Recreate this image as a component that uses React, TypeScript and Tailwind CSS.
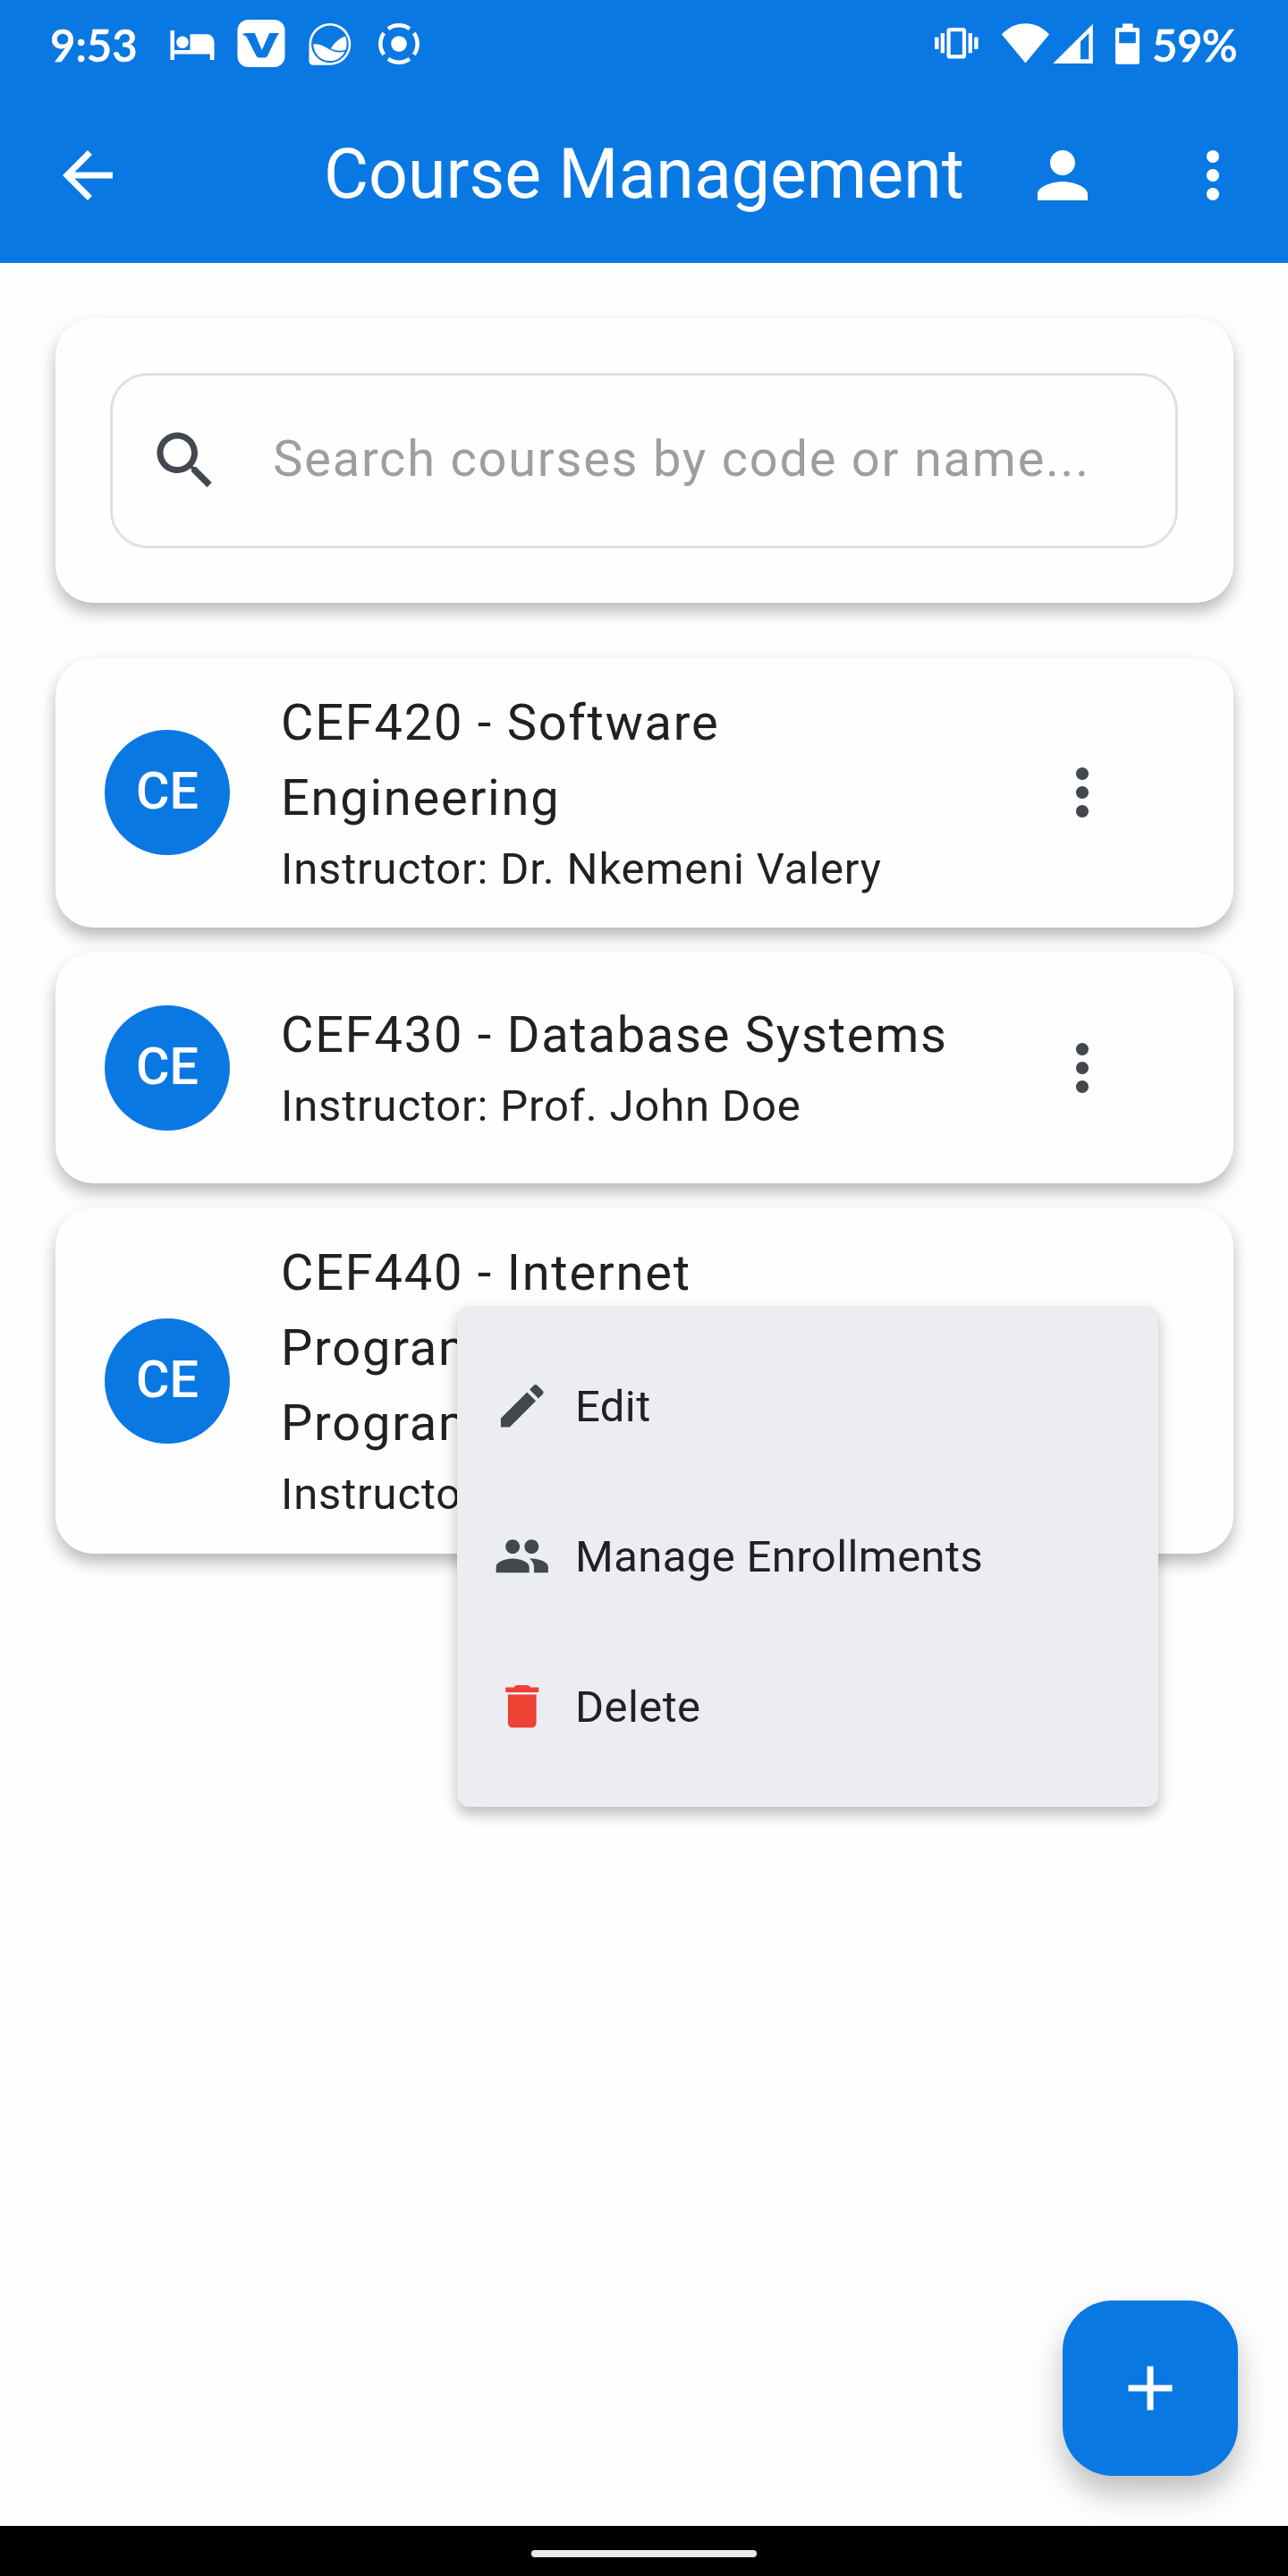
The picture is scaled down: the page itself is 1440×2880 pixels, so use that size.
import React from "react";

const ICON = {
  back: "M20 11H7.83l5.59-5.59L12 4l-8 8 8 8 1.41-1.41L7.83 13H20v-2z",
  person:
    "M12 12c2.21 0 4-1.79 4-4s-1.79-4-4-4-4 1.79-4 4 1.79 4 4 4zm0 2c-2.67 0-8 1.34-8 4v2h16v-2c0-2.66-5.33-4-8-4z",
  more: "M12 8c1.1 0 2-.9 2-2s-.9-2-2-2-2 .9-2 2 .9 2 2 2zm0 2c-1.1 0-2 .9-2 2s.9 2 2 2 2-.9 2-2-.9-2-2-2zm0 6c-1.1 0-2 .9-2 2s.9 2 2 2 2-.9 2-2-.9-2-2-2z",
  search:
    "M15.5 14h-.79l-.28-.27C15.41 12.59 16 11.11 16 9.5 16 5.91 13.09 3 9.5 3S3 5.91 3 9.5 5.91 16 9.5 16c1.61 0 3.09-.59 4.23-1.57l.27.28v.79l5 4.99L20.49 19l-4.99-5zm-6 0C7.01 14 5 11.99 5 9.5S7.01 5 9.5 5 14 7.01 14 9.5 11.99 14 9.5 14z",
  edit: "M3 17.25V21h3.75L17.81 9.94l-3.75-3.75L3 17.25zM20.71 7.04c.39-.39.39-1.02 0-1.41l-2.34-2.34c-.39-.39-1.02-.39-1.41 0l-1.83 1.83 3.75 3.75 1.83-1.83z",
  people:
    "M16 11c1.66 0 2.99-1.34 2.99-3S17.66 5 16 5c-1.66 0-3 1.34-3 3s1.34 3 3 3zm-8 0c1.66 0 2.99-1.34 2.99-3S9.66 5 8 5C6.34 5 5 6.34 5 8s1.34 3 3 3zm0 2c-2.33 0-7 1.17-7 3.5V19h14v-2.5c0-2.33-4.67-3.5-7-3.5zm8 0c-.29 0-.62.02-.97.05 1.16.84 1.97 1.97 1.97 3.45V19h6v-2.5c0-2.33-4.67-3.5-7-3.5z",
  trash:
    "M6 19c0 1.1.9 2 2 2h8c1.1 0 2-.9 2-2V7H6v12zM19 4h-3.500q-.4-1-1.300-1h-4.400q-.9 0-1.300 1H5v2h14V4z",
  plus: "M19 13h-6v6h-2v-6H5v-2h6V5h2v6h6v2z",
};

function Icon({ name, className = "" }: { name: keyof typeof ICON; className?: string }) {
  return (
    <svg viewBox="0 0 24 24" fill="currentColor" className={`shrink-0 ${className}`}>
      <path d={ICON[name]} />
    </svg>
  );
}

function StatusBar() {
  return (
    <div className="flex h-[98px] items-start text-white">
      <span className="mt-[20px] ml-[56px] w-[134px] font-[Lato] text-[49px] leading-[60px] font-semibold [-webkit-text-stroke:0.6px_white]">9:53</span>

      <svg className="mt-[34px] h-[33px] w-[50px] shrink-0" viewBox="190.5 34 50 33" fill="#fff">
        <path d="M191 34h4.5v22H213V38.3h18.5a8.5 8.5 0 0 1 8.5 8.5V67h-4.7v-6.4H195.500V67H191z" />
        <circle cx="204.500" cy="47.300" r="6.800" />
      </svg>

      <svg className="mt-[22px] ml-[25px] h-[53px] w-[54px] shrink-0" viewBox="265.5 22 54 53">
        <rect x="266" y="22" width="53" height="53" rx="12" fill="#fff" />
        <path
          d="M271.500 39.300q.8-2.300 4-2.300H285.300l8 19 8.500-19h9.200q2.200 0 1 1.500-1.200.5-2 2.200L299.500 62.500q-1 2-3 2h-6.500q-2 0-3-2L276.500 42q-1.300-2.800-5-2.700z"
          fill="#0a78e3"
        />
      </svg>

      <svg className="mt-[25px] ml-[26px] h-[49px] w-[48px] shrink-0" viewBox="345.5 25 48 49">
        <path d="M369.400 26a23.400 23.400 0 1 1 0 46.800H350.500a4.500 4.500 0 0 1-4.500-4.500V49.400A23.400 23.400 0 0 1 369.400 26z" fill="#fff" />
        <circle cx="369.400" cy="49.400" r="20.800" fill="#0a78e3" />
        <path d="M350.800 49.300c8-.6 12.700 3 18.700 6.200 5.500 3 10.500 3.600 16.500 2.200-3 6.300-9 10.400-16.600 10.400-10.500 0-18.300-8-18.600-18.800z" fill="#fff" />
        <path d="M370.300 54.200c4-6 9-11.500 16.500-13.700 1.500 5 1.800 9.500.3 15-5.500 2.200-11.500 1.300-16.800-1.300z" fill="#fff" />
      </svg>

      <svg className="mt-[26px] ml-[29.500px] h-[46px] w-[46px] shrink-0" viewBox="-23 -23 46 46">
        <circle r="8.800" fill="#fff" />
        <g fill="none" stroke="#fff" strokeWidth="4.500">
          <path d="M-12-16.800A20.600 20.600 0 0 1 12-16.800" />
          <path d="M16.800-12A20.600 20.600 0 0 1 16.800 12" />
          <path d="M12 16.800A20.600 20.600 0 0 1-12 16.800" />
          <path d="M-16.800 12A20.600 20.600 0 0 1-16.800-12" />
        </g>
      </svg>

      <svg className="mt-[31px] ml-auto h-[35px] w-[49px] shrink-0" viewBox="1045 31 49 35" fill="#fff">
        <rect x="1060.600" y="33.200" width="17.400" height="30.200" rx="1.500" fill="none" stroke="#fff" strokeWidth="4.200" />
        <rect x="1051.700" y="37" width="4.300" height="22.300" />
        <rect x="1045.100" y="41.600" width="4.400" height="13.300" />
        <rect x="1082.600" y="37" width="4.300" height="22.300" />
        <rect x="1089.200" y="41.600" width="4.400" height="13.300" />
      </svg>

      <svg className="mt-[26px] ml-[26px] h-[45px] w-[53px] shrink-0" viewBox="1120 26 53 45" fill="#fff">
        <path d="M1120 38.400C1127.500 30.500 1136.500 26.300 1146.500 26.300S1165.500 30.500 1173 38.400L1146.500 70.500z" />
      </svg>

      <svg className="mt-[26px] ml-[4px] h-[45px] w-[45px] shrink-0" viewBox="1177 26 45 45" fill="#fff">
        <path fillRule="evenodd" d="M1221.800 26.700V70.900H1177.300zM1217.300 37.200L1208 46.500V66.200h9.300z" />
      </svg>

      <svg className="mt-[26px] ml-[25px] h-[46px] w-[27px] shrink-0" viewBox="1247 26 27 46" fill="#fff">
        <path fillRule="evenodd" d="M1255 26.500h11.600V31H1272a2 2 0 0 1 2 2V69.700a2 2 0 0 1-2 2H1249a2 2 0 0 1-2-2V33a2 2 0 0 1 2-2h6zM1251.200 35.700V48.300h18.600V35.700z" />
      </svg>

      <span className="mt-[20px] ml-[14px] w-[152px] font-[Lato] text-[49px] leading-[60px] font-semibold tracking-[-0.5px] [-webkit-text-stroke:0.6px_white]">59%</span>
    </div>
  );
}

function AppBar() {
  return (
    <div className="flex h-[196px] items-center text-white">
      <Icon name="back" className="ml-[56px] size-[84px]" />
      <h1 className="mb-[3px] ml-[222px] w-[784px] text-[77px] leading-[98px] font-normal whitespace-nowrap">Course Management</h1>
      <Icon name="person" className="size-[84px]" />
      <Icon name="more" className="ml-[84px] size-[84px]" />
    </div>
  );
}

const CARD = "rounded-[42px] bg-[#fefefe] shadow-[0_10px_18px_rgba(0,0,0,0.27)]";

function SearchCard() {
  return (
    <div className={`${CARD} mx-[61.5px] mt-[61.5px] h-[318.75px] p-[61.25px]`}>
      <div className="flex h-[196.25px] items-center rounded-[42px] border-[3.5px] border-[#e0e0e0]">
        <Icon name="search" className="ml-[39px] size-[84px] text-[#43474e]" />
        <span className="mb-[3px] ml-[56.5px] text-[56px] leading-[84px] tracking-[1.75px] whitespace-nowrap text-[#9e9e9e]">
          Search courses by code or name...
        </span>
      </div>
    </div>
  );
}

type Course = { title: string[]; instructor: string; box: string };

const COURSES: Course[] = [
  { title: ["CEF420 - Software", "Engineering"], instructor: "Instructor: Dr. Nkemeni Valery", box: "h-[300.75px]" },
  { title: ["CEF430 - Database Systems"], instructor: "Instructor: Prof. John Doe", box: "h-[258.5px]" },
  {
    title: ["CEF440 - Internet", "Programming", "Programming"],
    instructor: "Instructor: Dr. Nkemeni Valery",
    box: "h-[385.5px]",
  },
];

function CourseCard({ course }: { course: Course }) {
  return (
    <div className={`${CARD} ${course.box} flex items-center`}>
      <div className="ml-[55.5px] flex size-[140px] shrink-0 items-center justify-center rounded-full bg-[#0a78e3] pb-[2px] text-[57.5px] leading-[84px] font-medium text-white">
        CE
      </div>
      <div className="ml-[57px] w-[780px] pt-[2px] whitespace-nowrap text-[#212121]">
        {course.title.map((line, i) => (
          <div key={i} className="text-[56px] leading-[84px] tracking-[1.75px]">
            {line}
          </div>
        ))}
        <div className="pt-px text-[49px] leading-[74px] tracking-[0.85px]">{course.instructor}</div>
      </div>
      <Icon name="more" className="ml-[74px] size-[84px] text-[#43474e]" />
    </div>
  );
}

const MENU: { icon: keyof typeof ICON; label: string; tint: string }[] = [
  { icon: "edit", label: "Edit", tint: "text-[#43474e]" },
  { icon: "people", label: "Manage Enrollments", tint: "text-[#43474e]" },
  { icon: "trash", label: "Delete", tint: "text-[#ed4134]" },
];

function CourseMenu() {
  return (
    <div className="absolute top-[1460px] left-[510.5px] w-[784px] rounded-[14px] bg-[#ecedf3] py-[28px] shadow-[0_8px_16px_rgba(0,0,0,0.27)]">
      {MENU.map((item) => (
        <div key={item.label} className="flex h-[168px] items-center pl-[41px]">
          <Icon name={item.icon} className={`size-[63.500px] ${item.tint}`} />
          <span className="mt-[2px] ml-[28px] text-[49px] leading-[70px] tracking-[0.4px] whitespace-nowrap text-[#212121]">
            {item.label}
          </span>
        </div>
      ))}
    </div>
  );
}

export default function App() {
  return (
    <div className="relative flex h-[2880px] w-[1440px] flex-col overflow-hidden bg-[#fefefe] font-[Roboto,sans-serif]">
      <header className="h-[294px] shrink-0 bg-[#0a78e3]">
        <StatusBar />
        <AppBar />
      </header>
      <main className="flex-1">
        <SearchCard />
        <div className="mx-[61.5px] mt-[61.5px] flex flex-col gap-[28px]">
          {COURSES.map((c) => (
            <CourseCard key={c.title[0]} course={c} />
          ))}
        </div>
      </main>
      <CourseMenu />
      <button className="absolute top-[2572px] left-[1188px] flex size-[196px] items-center justify-center rounded-[56px] bg-[#0a78e3] text-white shadow-[0_20px_34px_rgba(0,0,0,0.25)]">
        <Icon name="plus" className="size-[84px]" />
      </button>
      <nav className="relative flex h-[56px] shrink-0 justify-center bg-black pt-[27px]">
        <div className="h-[8px] w-[252px] rounded-full bg-[#ebe9e9]" />
      </nav>
    </div>
  );
}
